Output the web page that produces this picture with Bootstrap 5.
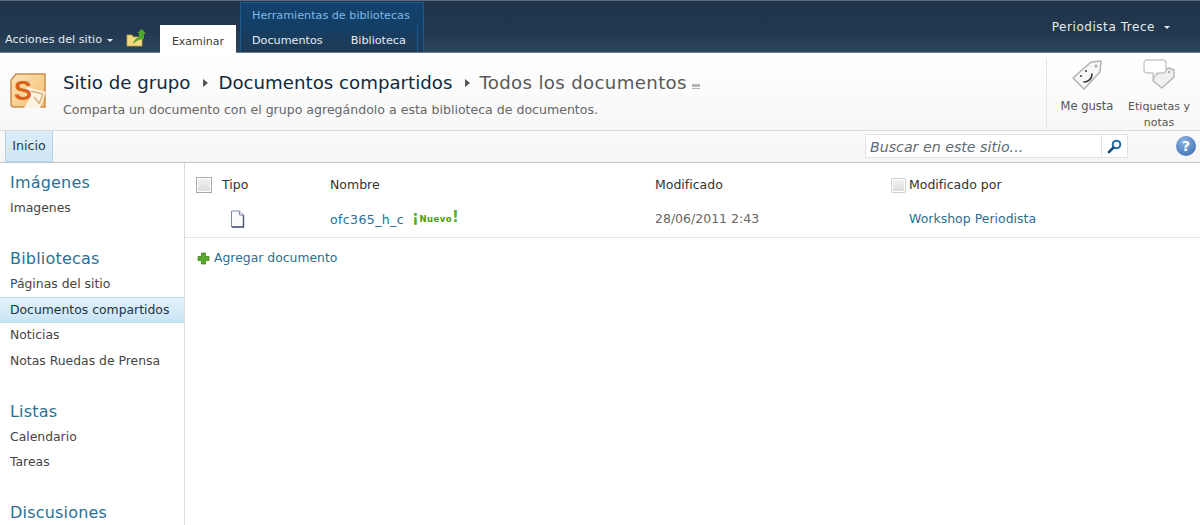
<!DOCTYPE html>
<html lang="es">
<head>
  <meta charset="UTF-8" />
  <meta name="viewport" content="width=device-width, initial-scale=1.0" />
  <title>Documentos compartidos</title>
  <link href="https://cdn.jsdelivr.net/npm/bootstrap@5.3.0/dist/css/bootstrap.min.css" rel="stylesheet" />
  <style>
    html, body { height: 525px; overflow: hidden; }
    body { font-family: "DejaVu Sans", Verdana, sans-serif; font-size: 12px; color: #3b3b3b; background: #fff; }
    a { text-decoration: none; }

    /* top ribbon */
    .topBar { height: 53px; background: linear-gradient(#1f3449 0, #21384f 60%, #2b455f 100%); border-top: 1px solid #5a6b7b; border-bottom: 1px solid #6d7d8b; color: #e6ebf0; }
    .siteActions { padding: 31px 0 0 5px; font-size: 11.2px; width: 160px; white-space: nowrap; }
    .siteActions .caretDown { margin-left: 5px; }
    .caretDown { display: inline-block; width: 0; height: 0; border-left: 3px solid transparent; border-right: 3px solid transparent; border-top: 3px solid #e6ebf0; }
    .upIcon { margin-left: 13px; margin-top: -5px; flex: none; }
    .browseTab { width: 76px; margin-top: 24px; height: 29px; background: #fff; color: #3b3b3b; font-size: 11px; padding-top: 9px; text-align: center; }
    .toolGroup { width: 184px; margin-left: 4px; margin-top: 1px; background: linear-gradient(#12426f 0, #133f66 45%, #1f3a55 100%); border: 1px solid #1d5a8c; border-bottom: 0; }
    .toolTitle { height: 22px; padding: 5px 0 0 11px; color: #7fb8e6; font-size: 11.2px; white-space: nowrap; }
    .toolTabs { width: 177px; flex: 1; border-right: 1px solid #1d5a8c; }
    .toolTab { padding: 8px 0 0 11px; font-size: 11.2px; }
    .toolTab + .toolTab { padding-left: 28px; }
    .userMenu { padding: 17px 30px 0 0; font-size: 12px; gap: 9px; letter-spacing: .55px; }

    /* title area */
    .titleRow { height: 78px; background: linear-gradient(#fff 0, #f7f7f7 100%); border-bottom: 1px solid #dcdcdc; }
    .siteLogo { margin: 20px 0 0 10px; flex: none; }
    .titleText { padding: 17px 0 0 16px; white-space: nowrap; }
    .crumbs { font-size: 18.2px; line-height: 26px; color: #0f2a3e; }
    .crumbSep { display: inline-block; width: 0; height: 0; border-top: 4px solid transparent; border-bottom: 4px solid transparent; border-left: 5px solid #555; margin: 0 10px 2px 13px; }
    .crumbSep + .crumbLast { margin-left: -1px; }
    .crumbLast { color: #5a5a5a; letter-spacing: .33px; }
    .viewArrow { display: inline-block; width: 8px; height: 5px; margin-left: 5px; border-top: 3px solid #b5b5b5; border-bottom: 1px solid #b5b5b5; }
    .titleDesc { font-size: 12.55px; color: #676767; margin-top: 5px; }
    .socialBox { width: 154px; border-left: 1px solid #e6e6e6; margin-top: 5px; padding-left: 4px; height: 72px; }
    .socialBtn { width: 72px; text-align: center; font-size: 11.5px; line-height: 16px; color: #555; padding-top: 1px; }
    .socialBtn svg { display: block; margin: 0 auto 7px; }
    .socialBtn.wideBtn { width: 66px; margin-left: 3px; font-size: 11px; }
    .socialBtn.wideBtn svg { margin-bottom: 10px; }

    /* search row */
    .toolRow { height: 32px; background: linear-gradient(#fbfbfb, #f5f5f5); border-bottom: 1px solid #c6c6c6; }
    .homeTab { margin-left: 5px; width: 48px; height: 31px; background: linear-gradient(#dcedf9, #cfe6f6); border: 1px solid #b4d3e8; border-top: 0; color: #1f3a4d; font-size: 12.6px; text-align: center; padding-top: 6px; }
    .searchBox { width: 263px; height: 24px; margin-top: 3px; background: #fff; border: 1px solid #e3e3e3; }
    .searchText { flex: 1; padding: 2px 4px; font-size: 14.2px; font-style: italic; color: #5f6b72; border-right: 1px solid #e3e3e3; }
    .searchGo { width: 25px; }
    .helpIcon { width: 20px; height: 20px; margin: 5px 4px 0 48px; border-radius: 50%; background: radial-gradient(circle at 40% 30%, #8fb4e4, #2f64ad); color: #fff; font-weight: 700; font-size: 14px; line-height: 20px; text-align: center; }

    /* left nav */
    .sideNav { width: 185px; flex: none; height: 362px; overflow: hidden; padding-top: 10px; border-right: 1px solid #dbdbdb; background: #fff; }
    .navHead { font-size: 16px; line-height: 20px; color: #2a7093; padding-left: 10px; letter-spacing: .2px; }
    .navItem { font-size: 12.4px; line-height: 18px; padding: 3.5px 0 3.5px 10px; color: #444; height: 25.5px; white-space: nowrap; }
    .navItem.activeItem { background: linear-gradient(#e3f1fb, #c9e4f6); border-top: 1px solid #bcdcf0; border-bottom: 1px solid #bcdcf0; color: #1d3444; margin-right: -1px; padding-top: 3px; }
    .navBlock { margin-bottom: 28px; }
    .navHead + .navItem { margin-top: 2.5px; }

    /* document list */
    .docArea { flex: 1; min-width: 0; }
    .docGrid { display: grid; grid-template-columns: 26px 108px 325px 236px 18px 1fr; padding-left: 11px; align-items: center; font-size: 12.5px; }
    .docHead { height: 44px; color: #333; }
    .docRow { height: 31px; border-bottom: 1px solid #e6e6e6; padding-bottom: 6px; color: #666; }
    .chkBox { width: 16px; height: 16px; border: 1px solid #a9a9a9; background: linear-gradient(#f2f2f2, #dcdcdc); box-shadow: inset 0 0 0 1px #fff; }
    .chkBox.softChk { width: 15px; height: 15px; border-color: #cfcfcf; border-radius: 2px; }
    .docLink { color: #2a6f90; }
    .fileLink { letter-spacing: .4px; }
    .newTag { font-size: 8.5px; font-weight: 700; color: #4c9a10; margin-left: 8px; position: relative; top: -2px; letter-spacing: .45px; }
    .newTag b { font-size: 15px; color: #59b11a; }
    .addLink { padding: 11px 0 0 12px; gap: 4px; color: #2a6f90; font-size: 12.4px; }
  </style>
</head>
<body>
  <div class="topBar d-flex">
    <div class="siteActions d-flex align-items-center align-self-start">
      <span>Acciones del sitio</span><span class="caretDown"></span>
      <svg class="upIcon" width="20" height="18" viewBox="0 0 20 18">
        <path d="M1 6h5l1 2h9v9H1z" fill="#f0d97e" stroke="#c9a94a" stroke-width=".8"/>
        <path d="M7 15c1-4 3-6 6-7V4l-2 0 5-4 4 5h-2v5c-3 0-7 1-11 5z" fill="#4fa62a"/>
      </svg>
    </div>
    <div class="browseTab">Examinar</div>
    <div class="toolGroup d-flex flex-column">
      <div class="toolTitle">Herramientas de bibliotecas</div>
      <div class="toolTabs d-flex">
        <div class="toolTab">Documentos</div>
        <div class="toolTab">Biblioteca</div>
      </div>
    </div>
    <div class="userMenu ms-auto d-flex align-items-center align-self-start">
      <span>Periodista Trece</span><span class="caretDown"></span>
    </div>
  </div>

  <div class="titleRow d-flex">
    <svg class="siteLogo" width="37" height="36" viewBox="0 0 37 36">
      <defs>
        <linearGradient id="logoFill" x1="0" y1="0" x2="1" y2="1">
          <stop offset="0" stop-color="#fbe3b8"/>
          <stop offset="1" stop-color="#f6bd6c"/>
        </linearGradient>
      </defs>
      <path d="M6 1h29v33H4a3 3 0 0 1-3-3V7z" fill="url(#logoFill)" stroke="#c98f4a" stroke-width="1.5"/>
      <path d="M17 14l19 5-6 16H14l5-8-4-5z" fill="#fdf3e2"/>
      <path d="M21 18l12 3-4 10" fill="none" stroke="#d9b27a" stroke-width="1.5"/>
      <path d="M24 24l6 7" stroke="#d9b27a" stroke-width="1.5"/>
      <text x="4" y="27" font-family="Liberation Sans, sans-serif" font-size="27" font-weight="700" fill="#d8641c">S</text>
    </svg>
    <div class="titleText">
      <div class="crumbs">Sitio de grupo<span class="crumbSep"></span>Documentos compartidos<span class="crumbSep"></span><span class="crumbLast">Todos los documentos</span><span class="viewArrow"></span></div>
      <div class="titleDesc">Comparta un documento con el grupo agregándolo a esta biblioteca de documentos.</div>
    </div>
    <div class="socialBox ms-auto d-flex">
      <div class="socialBtn">
        <svg width="32" height="32" viewBox="0 0 32 32">
          <path d="M2 19L20 3l10-1-1 11L13 30z" fill="#f6f6f6" stroke="#b4b4b4" stroke-width="1.6" stroke-linejoin="round"/>
          <circle cx="25" cy="7" r="1.5" fill="#aaa"/>
          <circle cx="10" cy="17" r="1.1" fill="#444"/><circle cx="15" cy="12" r="1.1" fill="#444"/>
          <path d="M13 23c4 0 8-3 8-8" fill="none" stroke="#333" stroke-width="1.6" stroke-linecap="round"/>
        </svg>
        Me gusta
      </div>
      <div class="socialBtn wideBtn">
        <svg width="32" height="30" viewBox="0 0 32 30">
          <path d="M12 16l14-7 5 2v7L19 29l-9-7z" fill="#f0f0f0" stroke="#b4b4b4" stroke-width="1.4" stroke-linejoin="round"/>
          <circle cx="26" cy="13" r="1.2" fill="#aaa"/>
          <path d="M4 1h16a3 3 0 0 1 3 3v7a3 3 0 0 1-3 3h-6l-4 5v-5H4a3 3 0 0 1-3-3V4a3 3 0 0 1 3-3z" fill="#fff" stroke="#c8c8c8" stroke-width="1.4"/>
        </svg>
        Etiquetas y notas
      </div>
    </div>
  </div>

  <div class="toolRow d-flex">
    <div class="homeTab">Inicio</div>
    <div class="ms-auto d-flex align-items-start">
      <div class="searchBox d-flex">
        <div class="searchText">Buscar en este sitio...</div>
        <div class="searchGo d-flex align-items-center justify-content-center">
          <svg width="15" height="15" viewBox="0 0 15 15">
            <circle cx="9.5" cy="5.5" r="3.8" fill="none" stroke="#1f6fa8" stroke-width="2"/>
            <path d="M6.5 8.5L2 13" stroke="#174f7c" stroke-width="2.6" stroke-linecap="round"/>
          </svg>
        </div>
      </div>
      <div class="helpIcon">?</div>
    </div>
  </div>

  <div class="d-flex">
    <nav class="sideNav">
      <div class="navBlock">
        <div class="navHead">Imágenes</div>
        <div class="navItem">Imagenes</div>
      </div>
      <div class="navBlock">
        <div class="navHead">Bibliotecas</div>
        <div class="navItem">Páginas del sitio</div>
        <div class="navItem activeItem">Documentos compartidos</div>
        <div class="navItem">Noticias</div>
        <div class="navItem">Notas Ruedas de Prensa</div>
      </div>
      <div class="navBlock">
        <div class="navHead">Listas</div>
        <div class="navItem">Calendario</div>
        <div class="navItem">Tareas</div>
      </div>
      <div class="navBlock mb-0">
        <div class="navHead">Discusiones</div>
      </div>
    </nav>

    <main class="docArea">
      <div class="docGrid docHead">
        <div><div class="chkBox"></div></div>
        <div>Tipo</div>
        <div>Nombre</div>
        <div>Modificado</div>
        <div><div class="chkBox softChk"></div></div>
        <div>Modificado por</div>
      </div>
      <div class="docGrid docRow">
        <div></div>
        <div class="ps-2">
          <svg width="15" height="18" viewBox="0 0 15 18">
            <path d="M1.5 1h8l4 4v12h-12z" fill="#fbfbfd" stroke="#7d8aa6" stroke-width="1"/>
            <path d="M9.5 1v4h4" fill="#dfe3ec" stroke="#7d8aa6" stroke-width="1"/>
            <path d="M13.500 5v12H2" fill="none" stroke="#4a5670" stroke-width="1.4"/>
          </svg>
        </div>
        <div><a class="docLink fileLink" href="#">ofc365_h_c</a><span class="newTag"><b>¡</b>Nuevo<b>!</b></span></div>
        <div>28/06/2011 2:43</div>
        <div></div>
        <div><a class="docLink" href="#">Workshop Periodista</a></div>
      </div>
      <a class="addLink d-flex align-items-center" href="#">
        <svg width="13" height="13" viewBox="0 0 13 13">
          <path d="M4.500 1h4v3.500H12v4H8.500V12h-4V8.500H1v-4h3.500z" fill="#58a82c" stroke="#3d8a1c" stroke-width=".8"/>
        </svg>
        Agregar documento
      </a>
    </main>
  </div>

  <script src="https://cdn.jsdelivr.net/npm/bootstrap@5.3.0/dist/js/bootstrap.bundle.min.js"></script>
</body>
</html>
